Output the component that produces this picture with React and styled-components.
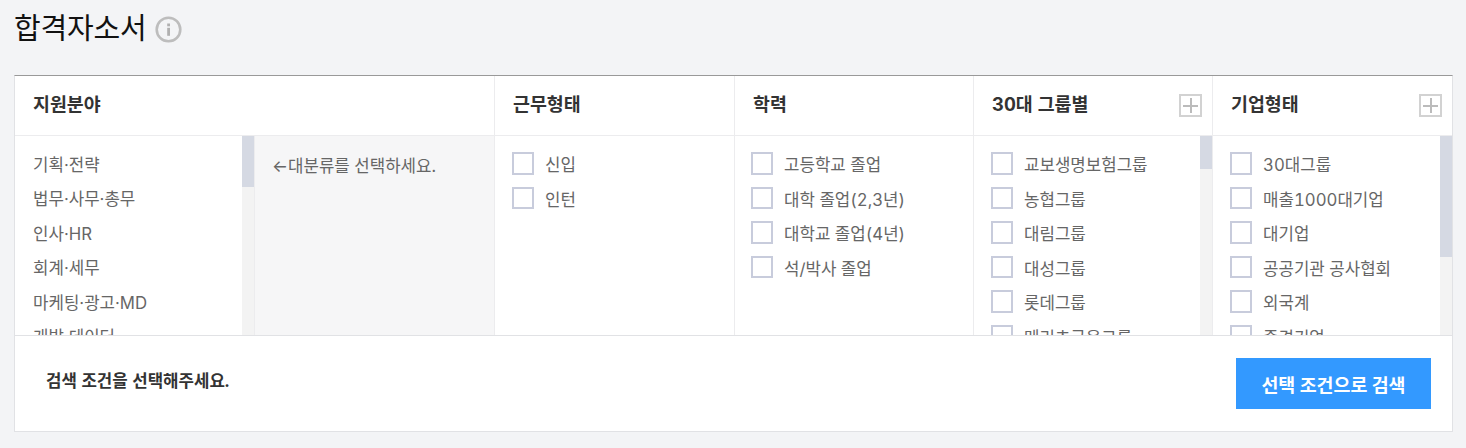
import React from 'react'
import styled, { createGlobalStyle } from 'styled-components'

const GlobalStyle = createGlobalStyle`
  html, body {
    margin: 0;
    padding: 0;
    background: #f3f4f6;
  }
  body {
    font-family: Inter, "Noto Sans CJK KR", sans-serif;
    font-variant-numeric: tabular-nums;
    color: #333;
  }
  * {
    box-sizing: border-box;
  }
`

const columns = [
  {
    title: '근무형태',
    inset: 17,
    items: ['신입', '인턴'],
  },
  {
    title: '학력',
    inset: 16,
    items: ['고등학교 졸업', '대학 졸업(2,3년)', '대학교 졸업(4년)', '석/박사 졸업'],
  },
  {
    title: '30대 그룹별',
    inset: 17,
    more: true,
    thumb: 33,
    items: ['교보생명보험그룹', '농협그룹', '대림그룹', '대성그룹', '롯데그룹', '메리츠금융그룹'],
  },
  {
    title: '기업형태',
    inset: 17,
    more: true,
    thumb: 121,
    items: ['30대그룹', '매출1000대기업', '대기업', '공공기관 공사협회', '외국계', '중견기업'],
  },
]

const categories = ['기획·전략', '법무·사무·총무', '인사·HR', '회계·세무', '마케팅·광고·MD', '개발·데이터']

const Scrollbar = ({ thumb }) => (
  <Track>
    <Thumb style={{ height: thumb }} />
  </Track>
)

const InfoIcon = () => (
  <InfoSvg viewBox="0 0 27 27" aria-hidden="true">
    <circle cx="13.5" cy="13.5" r="11.8" fill="none" stroke="#bdbdbd" strokeWidth="2.6" />
    <rect x="12.2" y="7.5" width="2.8" height="2.8" fill="#b0b0b0" />
    <rect x="12.2" y="11.8" width="2.8" height="8" fill="#b0b0b0" />
  </InfoSvg>
)

const App = () => {
  return (
    <Page>
      <GlobalStyle />
      <Heading>
        <Title>합격자소서</Title>
        <InfoIcon />
      </Heading>
      <Panel>
        <Grid>
          <Column>
            <ColumnHead>지원분야</ColumnHead>
            <ColumnBody>
              <CategoryList>
                {categories.map((name) => (
                  <Category key={name}>{name}</Category>
                ))}
              </CategoryList>
              <Scrollbar thumb={51} />
              <SubCategory>←대분류를 선택하세요.</SubCategory>
            </ColumnBody>
          </Column>
          {columns.map((col) => (
            <Column key={col.title}>
              <ColumnHead>
                {col.title}
                {col.more && <MoreButton aria-label="더보기" />}
              </ColumnHead>
              <ColumnBody>
                <CheckList $inset={col.inset}>
                  {col.items.map((item) => (
                    <CheckItem key={item}>
                      <CheckBox />
                      {item}
                    </CheckItem>
                  ))}
                </CheckList>
                {col.thumb && <Scrollbar thumb={col.thumb} />}
              </ColumnBody>
            </Column>
          ))}
        </Grid>
        <Footer>
          <FooterText>검색 조건을 선택해주세요.</FooterText>
          <SearchButton>선택 조건으로 검색</SearchButton>
        </Footer>
      </Panel>
    </Page>
  )
}

const Page = styled.div`
  width: 1466px;
  height: 448px;
  padding: 0 13px 0 14px;
  overflow: hidden;
`

const Heading = styled.div`
  display: flex;
  align-items: center;
  height: 75px;
  padding-bottom: 18px;
`

const Title = styled.h1`
  margin: 0;
  font-size: 29px;
  font-weight: 400;
  line-height: 30px;
  letter-spacing: -0.2px;
  color: #111;
`

const InfoSvg = styled.svg`
  width: 27px;
  height: 27px;
  margin: 2px 0 0 9px;
`

const Panel = styled.div`
  width: 1439px;
  height: 357px;
  background: #fff;
  border: 1px solid #e1e2e5;
  border-top-color: #999;
`

const Grid = styled.div`
  display: grid;
  grid-template-columns: 479px 240px 239px 239px 240px;
  grid-template-rows: 259px;
  height: 259px;
`

const Column = styled.div`
  display: flex;
  flex-direction: column;
  min-width: 0;
  min-height: 0;
  overflow: hidden;
  & + & {
    border-left: 1px solid #ececee;
  }
`

const ColumnHead = styled.div`
  position: relative;
  flex: none;
  height: 60px;
  padding: 0 18px;
  border-bottom: 1px solid #ececee;
  font-size: 18.4px;
  font-weight: 700;
  line-height: 56px;
  color: #333;
`

const MoreButton = styled.button`
  position: absolute;
  top: 18px;
  right: 10px;
  width: 23px;
  height: 23px;
  padding: 0;
  background:
    linear-gradient(#bbb, #bbb) center / 15px 2px no-repeat,
    linear-gradient(#bbb, #bbb) center / 2px 15px no-repeat,
    #fff;
  border: 2px solid #d2d2d2;
`

const ColumnBody = styled.div`
  display: flex;
  flex: 1;
  min-height: 0;
`

const CategoryList = styled.ul`
  flex: 1;
  margin: 0;
  padding: 11.5px 18px 0;
  list-style: none;
  overflow: hidden;
`

const Category = styled.li`
  height: 34.5px;
  font-size: 16.8px;
  line-height: 34.5px;
  color: #666;
  white-space: nowrap;
`

const Track = styled.div`
  flex: none;
  width: 12px;
  background: #f3f3f3;
`

const Thumb = styled.div`
  background: #d5d9e3;
`

const SubCategory = styled.div`
  flex: none;
  width: 240px;
  padding: 20px 17px 0;
  background: #f6f6f7;
  border-left: 1px solid #ececee;
  font-size: 16.8px;
  line-height: 20px;
  color: #666;
`

const CheckList = styled.ul`
  flex: 1;
  min-width: 0;
  margin: 0;
  padding: 10.75px 17px 0 ${(p) => p.$inset}px;
  list-style: none;
  overflow: hidden;
`

const CheckItem = styled.li`
  display: flex;
  align-items: center;
  height: 34.5px;
  font-size: 16.8px;
  color: #666;
  white-space: nowrap;
`

const CheckBox = styled.span`
  flex: none;
  width: 22px;
  height: 22.5px;
  margin: -1.5px 11px 0 0;
  background: #fff;
  border: 2px solid #c8ccdc;
`

const Footer = styled.div`
  display: flex;
  align-items: center;
  justify-content: space-between;
  height: 96px;
  padding: 0 21px 0 31px;
  border-top: 1px solid #e1e2e5;
`

const FooterText = styled.p`
  margin: 0 0 7px;
  font-size: 16.8px;
  font-weight: 700;
  color: #333;
`

const SearchButton = styled.button`
  width: 195px;
  height: 51px;
  padding: 0;
  background: #3399ff;
  border: 0;
  font-family: inherit;
  font-size: 18.4px;
  font-weight: 700;
  color: #fff;
`

export default App
